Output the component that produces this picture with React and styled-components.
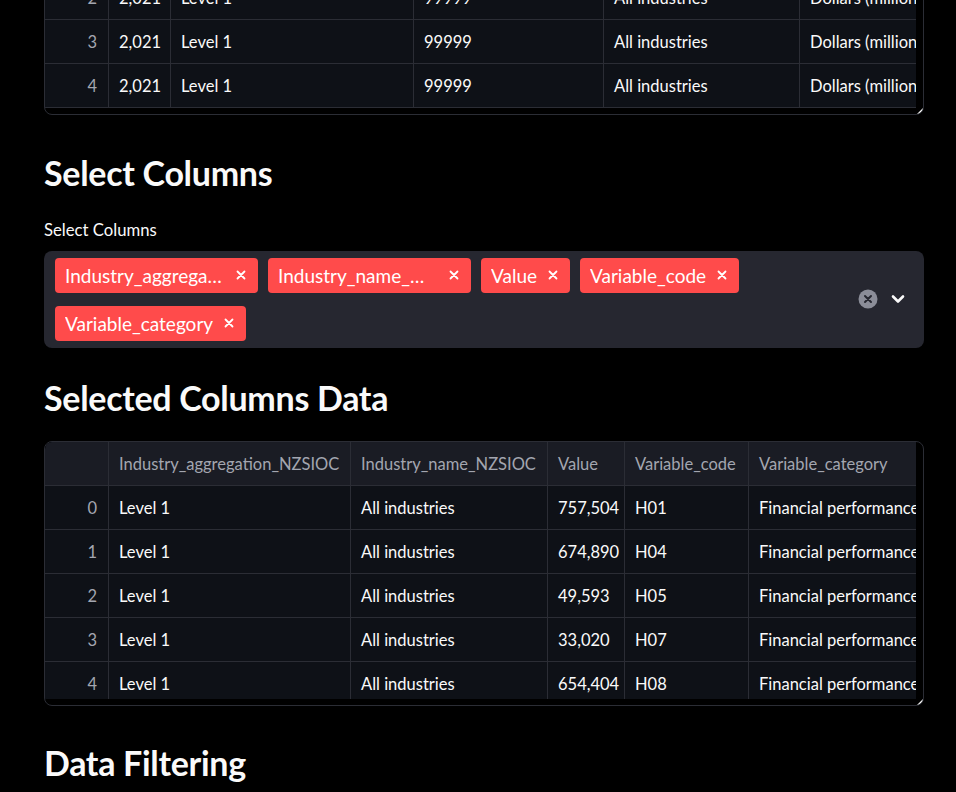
import React from "react";
import styled, { createGlobalStyle } from "styled-components";

const GlobalStyle = createGlobalStyle`
  html, body {
    margin: 0;
    padding: 0;
    background: #000000;
  }
  body {
    font-family: Lato, "Liberation Sans", sans-serif;
    color: #fafafa;
  }
`;

// first table is scrolled so only its last rows show at the top of the page
const topColumns = [
  { key: "year", title: "Year", width: 62 },
  { key: "agg", title: "Industry_aggregation_NZSIOC", width: 243 },
  { key: "code", title: "Industry_code_NZSIOC", width: 190 },
  { key: "name", title: "Industry_name_NZSIOC", width: 196 },
  { key: "units", title: "Units", width: 220 },
];

const topRows = [0, 1, 2, 3, 4].map(() => ({
  year: "2,021",
  agg: "Level 1",
  code: "99999",
  name: "All industries",
  units: "Dollars (millions)",
}));

const selectedColumns = [
  { key: "agg", title: "Industry_aggregation_NZSIOC", width: 242 },
  { key: "name", title: "Industry_name_NZSIOC", width: 197 },
  { key: "value", title: "Value", width: 77 },
  { key: "code", title: "Variable_code", width: 124 },
  { key: "category", title: "Variable_category", width: 220 },
];

const selectedRows = [
  ["757,504", "H01"],
  ["674,890", "H04"],
  ["49,593", "H05"],
  ["33,020", "H07"],
  ["654,404", "H08"],
].map(([value, code]) => ({
  agg: "Level 1",
  name: "All industries",
  value,
  code,
  category: "Financial performance",
}));

const tags = [
  "Industry_aggregation_NZSIOC",
  "Industry_name_NZSIOC",
  "Value",
  "Variable_code",
  "Variable_category",
];

const DataGrid = ({ columns, rows, pull, height }) => (
  <GridFrame $pull={pull}>
    <GridViewport $height={height}>
      <GridRow $header>
        <Cell $width={64} $header />
        {columns.map(col => (
          <Cell key={col.key} $width={col.width} $header>
            {col.title}
          </Cell>
        ))}
      </GridRow>
      {rows.map((row, i) => (
        <GridRow key={i}>
          <Cell $width={64} $index>
            {i}
          </Cell>
          {columns.map(col => (
            <Cell key={col.key} $width={col.width}>
              {row[col.key]}
            </Cell>
          ))}
        </GridRow>
      ))}
    </GridViewport>
    <ResizeHandle viewBox="0 0 6 6">
      <polygon points="6,0 6,6 0,6" fill="#ffffff" />
    </ResizeHandle>
  </GridFrame>
);

const App = () => {
  return (
    <Page>
      <GlobalStyle />
      <DataGrid columns={topColumns} rows={topRows} pull={157} height={264} />

      <SectionTitle $top={38}>Select Columns</SectionTitle>
      <FieldLabel>Select Columns</FieldLabel>
      <MultiSelect>
        <TagList>
          {tags.map(t => (
            <Tag key={t}>
              <TagLabel>{t}</TagLabel>
              <TagRemove viewBox="0 0 12 12">
                <path d="M2.5 2.5 L9.5 9.5 M9.5 2.5 L2.5 9.5" />
              </TagRemove>
            </Tag>
          ))}
        </TagList>
        <Controls>
          <ClearIcon viewBox="0 0 20 20">
            <circle cx="10" cy="10" r="9.5" fill="#8b8d98" />
            <path
              d="M7 7 L13 13 M13 7 L7 13"
              stroke="#262730"
              strokeWidth="2"
              strokeLinecap="round"
            />
          </ClearIcon>
          <ChevronIcon viewBox="0 0 16 16">
            <path
              d="M3 5.5 L8 10.5 L13 5.5"
              fill="none"
              stroke="#fafafa"
              strokeWidth="2.6"
              strokeLinecap="round"
              strokeLinejoin="round"
            />
          </ChevronIcon>
        </Controls>
      </MultiSelect>

      <SectionTitle $top={30}>Selected Columns Data</SectionTitle>
      <DataGrid columns={selectedColumns} rows={selectedRows} height={257} />

      <SectionTitle $top={37}>Data Filtering</SectionTitle>
    </Page>
  );
};

const Page = styled.div`
  width: 880px;
  padding: 0 32px 40px 44px;
`;

const SectionTitle = styled.h2`
  margin: ${p => p.$top}px 0 0 0;
  font-size: 34px;
  line-height: 1.2;
  font-weight: 700;
  color: #fafafa;
  letter-spacing: -0.3px;
`;

const FieldLabel = styled.div`
  margin-top: 27px;
  font-size: 16.7px;
  line-height: 18px;
  color: #fafafa;
`;

const MultiSelect = styled.div`
  margin-top: 12px;
  display: flex;
  align-items: center;
  background: #262730;
  border-radius: 8px;
  padding: 7px 0 7px 11px;
  margin-bottom: 30px;
`;

const TagList = styled.div`
  flex: 1;
  display: flex;
  flex-wrap: wrap;
  column-gap: 10px;
  row-gap: 13px;
`;

const Tag = styled.div`
  display: flex;
  align-items: center;
  box-sizing: border-box;
  max-width: 203px;
  height: 35px;
  padding: 0 11px 0 10px;
  gap: 10px;
  background: #ff4b4b;
  border-radius: 4px;
  color: #ffffff;
  font-size: 19px;
  white-space: nowrap;
`;

const TagLabel = styled.span`
  overflow: hidden;
  text-overflow: ellipsis;
  min-width: 0;
`;

const TagRemove = styled.svg`
  flex: 0 0 12px;
  width: 12px;
  height: 12px;
  stroke: #ffffff;
  stroke-width: 1.8;
  stroke-linecap: round;
`;

const Controls = styled.div`
  display: flex;
  align-items: center;
  gap: 12px;
  padding: 0 18px 0 12px;
`;

const ClearIcon = styled.svg`
  width: 20px;
  height: 20px;
`;

const ChevronIcon = styled.svg`
  width: 16px;
  height: 16px;
`;

const GridFrame = styled.div`
  position: relative;
  margin-top: ${p => (p.$pull ? -p.$pull : 22)}px;
  border: 1px solid #2b2d35;
  border-radius: 8px;
  background: #000000;
  padding: 0 7px 6px 0;
  overflow: hidden;
`;

const GridViewport = styled.div`
  height: ${p => p.$height}px;
  overflow: hidden;
  background: #0e1117;
  border-radius: 7px 0 0 0;
`;

const GridRow = styled.div`
  display: flex;
  height: 44px;
  box-sizing: border-box;
  border-bottom: 1px solid #2b2d35;
  background: ${p => (p.$header ? "#1a1c24" : "#0e1117")};
`;

const Cell = styled.div`
  flex: 0 0 ${p => p.$width}px;
  box-sizing: border-box;
  border-right: 1px solid #2b2d35;
  display: flex;
  align-items: center;
  justify-content: ${p => (p.$index ? "flex-end" : "flex-start")};
  padding: 1px 11px 0 10px;
  font-size: 16.5px;
  white-space: nowrap;
  overflow: hidden;
  color: ${p => (p.$header || p.$index ? "#a3a6b0" : "#fafafa")};
`;

const ResizeHandle = styled.svg`
  position: absolute;
  right: 0;
  bottom: 0;
  width: 6px;
  height: 6px;
`;

export default App;
